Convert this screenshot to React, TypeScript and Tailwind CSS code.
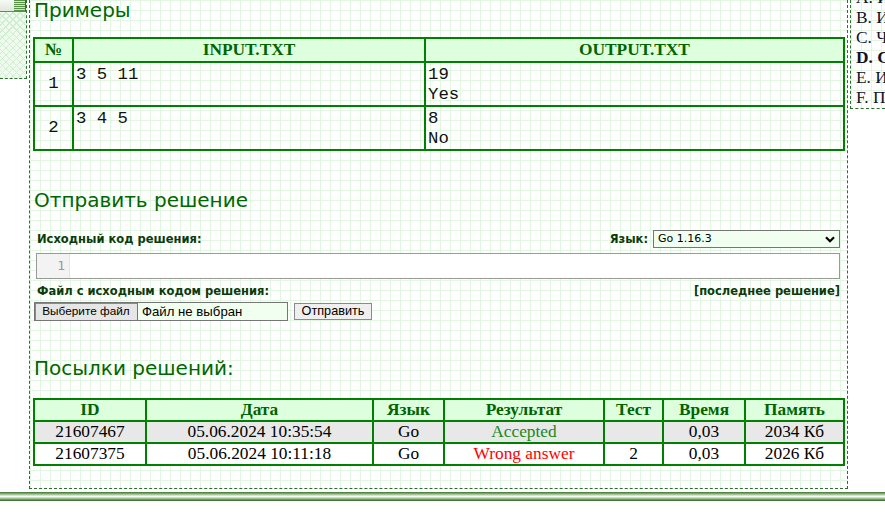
import React from "react";

const grid =
  "[background-image:linear-gradient(to_right,#e2f7e2_1px,transparent_1px),linear-gradient(to_bottom,#e2f7e2_1px,transparent_1px)] [background-size:10px_10px]";

function LeftCol() {
  return (
    <div className="w-[27px] shrink-0 border-r border-b border-dashed border-[#2a6f2a]">
      <div className="h-[12px] flex border-b border-[#5d8f4f]">
        <div className="w-[14px] bg-[linear-gradient(to_bottom,#f7faf6,#dfe9db)]" />
        <div className="flex-1 [background-image:repeating-linear-gradient(to_bottom,#5a9249_0px,#5a9249_1px,#d3e3cc_1px,#d3e3cc_2px)] border-r border-[#3e6f32]" />
      </div>
      <div className="h-[66px] bg-[#effbef] [background-image:repeating-linear-gradient(45deg,#cfeecf_0px,#cfeecf_1px,transparent_1px,transparent_5px),repeating-linear-gradient(-45deg,#cfeecf_0px,#cfeecf_1px,transparent_1px,transparent_5px)]" />
    </div>
  );
}

function Heading({ children, className = "" }: { children: React.ReactNode; className?: string }) {
  return (
    <div className={"text-[20px] leading-[20px] h-[20px] pl-[1px] text-[#006600] whitespace-nowrap " + className}>
      {children}
    </div>
  );
}

const thBase = "border-r-2 border-b-2 border-[#008000] bg-[#ddffdd] text-[#006400] font-bold p-0";
const tdBase = "border-r-2 border-b-2 border-[#008000] p-0";

function ExamplesTable() {
  const rows = [
    { n: "1", input: ["3 5 11"], output: ["19", "Yes"] },
    { n: "2", input: ["3 4 5"], output: ["8", "No"] },
  ];
  return (
    <table className="border-separate border-spacing-0 border-l-2 border-t-2 border-[#008000] w-[812px] table-fixed font-['Liberation_Serif',serif] text-[17.33px] leading-[20px]">
      <colgroup>
        <col className="w-[39px]" />
        <col className="w-[352px]" />
        <col />
      </colgroup>
      <thead>
        <tr>
          <th className={thBase + " h-[24px] text-center"}>№</th>
          <th className={thBase + " h-[24px] text-center"}>INPUT.TXT</th>
          <th className={thBase + " h-[24px] text-center"}>OUTPUT.TXT</th>
        </tr>
      </thead>
      <tbody className="font-['Liberation_Mono',monospace] text-[#111]">
        {rows.map((r) => (
          <tr key={r.n}>
            <td className={tdBase + " h-[44px] text-center align-middle"}>{r.n}</td>
            <td className={tdBase + " h-[44px] align-top pt-[2px] pl-[2px] whitespace-pre"}>
              {r.input.map((l, i) => (
                <div key={i}>{l}</div>
              ))}
            </td>
            <td className={tdBase + " h-[44px] align-top pt-[2px] pl-[2px] whitespace-pre"}>
              {r.output.map((l, i) => (
                <div key={i}>{l}</div>
              ))}
            </td>
          </tr>
        ))}
      </tbody>
    </table>
  );
}

function SubmitForm() {
  const label = "font-bold text-[11.5px] leading-[15px] text-[#0c3a0c] whitespace-nowrap";
  return (
    <div>
      <div className="mt-[20px] h-[18px] flex items-center justify-between pl-[4px] pr-[5px]">
        <span className={label}>Исходный код решения:</span>
        <div className="flex items-center">
          <span className={label}>Язык:</span>
          <div className="ml-[5px] w-[187px] h-[18px] border border-[#767676] bg-[#f0fff0] flex items-center justify-between pl-[4px] pr-[4px] text-[11px] text-black">
            <span>Go 1.16.3</span>
            <svg width="10" height="7" viewBox="0 0 10 7">
              <path d="M1 1.2 L5 5.2 L9 1.2" stroke="#000" strokeWidth="2.2" fill="none" />
            </svg>
          </div>
        </div>
      </div>
      <div className="mt-[5px] ml-[3px] mr-[5px] h-[26px] border border-[#999] bg-white flex">
        <div className="w-[33px] h-full bg-[#f3f3f3] border-r border-[#e4e4e4] flex items-center justify-end pr-[4px] font-['DejaVu_Sans_Mono',monospace] text-[13px] text-[#999]">
          1
        </div>
      </div>
      <div className="mt-[5px] h-[15px] flex items-center justify-between pl-[4px] pr-[5px]">
        <span className={label}>Файл с исходным кодом решения:</span>
        <span className={label}>[последнее решение]</span>
      </div>
      <div className="mt-[3px] ml-[1px] h-[19px] flex items-center font-['Liberation_Sans',sans-serif] text-black">
        <div className="w-[254px] h-[19px] flex border border-[#767676] bg-[#f0fff0]">
          <div className="w-[103px] h-full bg-[#e6e6e6] border-r border-[#767676] shadow-[inset_1px_1px_0_#8a8a8a] flex items-center justify-center leading-[15px] text-[11.8px]">
            Выберите файл
          </div>
          <div className="pl-[4px] flex items-center leading-[15px] text-[13.2px]">Файл не выбран</div>
        </div>
        <div className="ml-[6px] w-[78px] h-[17px] border border-[#8a8a8a] bg-[#efefef] flex items-center justify-center leading-[15px] text-[12.7px]">
          Отправить
        </div>
      </div>
    </div>
  );
}

function SubmissionsTable() {
  const cols = [
    { t: "ID", w: "w-[112px]" },
    { t: "Дата", w: "w-[227px]" },
    { t: "Язык", w: "w-[71px]" },
    { t: "Результат", w: "w-[160px]" },
    { t: "Тест", w: "w-[59px]" },
    { t: "Время", w: "w-[82px]" },
    { t: "Память", w: "" },
  ];
  const rows = [
    { id: "21607467", d: "05.06.2024 10:35:54", l: "Go", r: "Accepted", ok: true, t: "", tm: "0,03", m: "2034 Кб", bg: "bg-[#e8e8e8]" },
    { id: "21607375", d: "05.06.2024 10:11:18", l: "Go", r: "Wrong answer", ok: false, t: "2", tm: "0,03", m: "2026 Кб", bg: "bg-white" },
  ];
  return (
    <table className="border-separate border-spacing-0 border-l-2 border-t-2 border-[#008000] w-[812px] table-fixed font-['Liberation_Serif',serif] text-[17.33px] leading-[20px] text-center">
      <colgroup>
        {cols.map((c) => (
          <col key={c.t} className={c.w} />
        ))}
      </colgroup>
      <thead>
        <tr>
          {cols.map((c) => (
            <th key={c.t} className={thBase + " h-[22px]"}>
              {c.t}
            </th>
          ))}
        </tr>
      </thead>
      <tbody className="text-black">
        {rows.map((r) => (
          <tr key={r.id} className={r.bg}>
            <td className={tdBase + " h-[22px]"}>{r.id}</td>
            <td className={tdBase + " h-[22px]"}>{r.d}</td>
            <td className={tdBase + " h-[22px]"}>{r.l}</td>
            <td className={tdBase + " h-[22px] " + (r.ok ? "text-[#1a8a1a]" : "text-[#ff0000]")}>{r.r}</td>
            <td className={tdBase + " h-[22px]"}>{r.t}</td>
            <td className={tdBase + " h-[22px]"}>{r.tm}</td>
            <td className={tdBase + " h-[22px]"}>{r.m}</td>
          </tr>
        ))}
      </tbody>
    </table>
  );
}

function Main() {
  return (
    <div className={"ml-[2px] w-[819px] shrink-0 border-x border-b border-dashed border-[#2a6f2a] pl-[3px] pr-[2px] pb-[22px] bg-white " + grid}>
      <Heading className="h-[37px]">Примеры</Heading>
      <ExamplesTable />
      <Heading className="mt-[39px]">Отправить решение</Heading>
      <SubmitForm />
      <Heading className="mt-[37px]">Посылки решений:</Heading>
      <div className="mt-[20px]">
        <SubmissionsTable />
      </div>
    </div>
  );
}

function RightCol() {
  const items = [
    { t: "A. Игра", b: false },
    { t: "B. Игра", b: false },
    { t: "C. Числа", b: false },
    { t: "D. Сумма", b: true },
    { t: "E. Игра", b: false },
    { t: "F. Поиск", b: false },
  ];
  return (
    <div className={"ml-[2px] flex-1 min-w-0 h-[109px] overflow-hidden border-l border-b border-dashed border-[#2a6f2a] pl-[5px] bg-white " + grid}>
      <div className="-mt-[12px] font-['Liberation_Serif',serif] text-[17.33px] leading-[20px] text-[#10102a] whitespace-nowrap">
        {items.map((i) => (
          <div key={i.t} className={i.b ? "font-bold" : ""}>
            {i.t}
          </div>
        ))}
      </div>
    </div>
  );
}

export default function App() {
  return (
    <div className="w-[885px] h-[519px] overflow-hidden bg-white font-['DejaVu_Sans',sans-serif]">
      <div className="flex items-start">
        <LeftCol />
        <Main />
        <RightCol />
      </div>
      <div className="mt-[3px] h-[9px] bg-[linear-gradient(to_bottom,#3f7531_0%,#7ea86e_18%,#d2e2c9_38%,#f6faf4_50%,#c5dab9_64%,#70a05f_82%,#2f6224_100%)]" />
    </div>
  );
}
